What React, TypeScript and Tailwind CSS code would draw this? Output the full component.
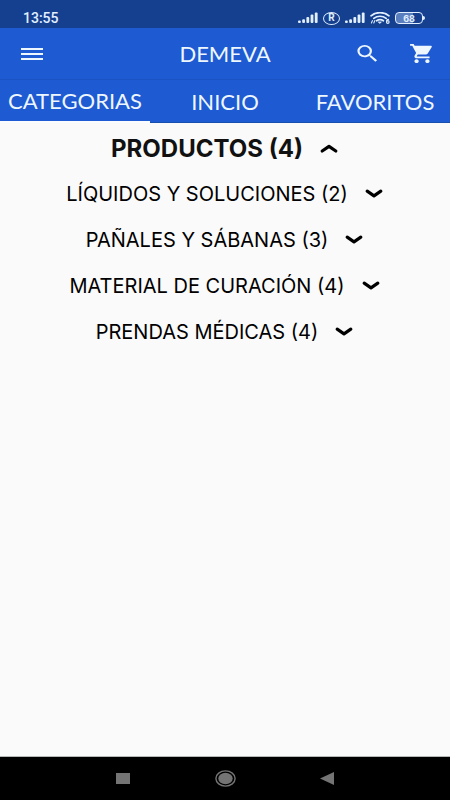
import React, { useState } from "react";

const tabs = ["CATEGORIAS", "INICIO", "FAVORITOS"];

const categories = [
  { name: "LÍQUIDOS Y SOLUCIONES", count: 2 },
  { name: "PAÑALES Y SÁBANAS", count: 3 },
  { name: "MATERIAL DE CURACIÓN", count: 4 },
  { name: "PRENDAS MÉDICAS", count: 4 },
];

const SignalIcon = () => (
  <svg className="h-3 w-5" viewBox="0 0 20 12" fill="currentColor">
    <rect x="0" y="8.6" width="2.8" height="2.4" rx="1" />
    <rect x="4.2" y="7.2" width="2.8" height="3.8" rx="1" />
    <rect x="8.4" y="5" width="2.8" height="6" rx="1" />
    <rect x="12.6" y="2.6" width="2.8" height="8.4" rx="1" />
    <rect x="16.8" y="0.4" width="2.8" height="10.6" rx="1" />
  </svg>
);

const WifiIcon = () => (
  <svg
    className="h-3 w-5"
    viewBox="0 0 20 12"
    fill="none"
    stroke="currentColor"
    strokeWidth="1.7"
    strokeLinecap="round"
  >
    <path d="M1 3.8C6-.4 14-.4 19 3.8" />
    <path d="M3.8 6.4c3.6-2.9 8.8-2.9 12.4 0" />
    <path d="M6.6 8.8c2.1-1.6 4.7-1.6 6.8 0" />
    <path d="M8.6 10h2.8L10 11.2z" fill="currentColor" strokeWidth="0.8" />
    <path d="M1.4 11l1-2.4M3.8 11l1-2.4" strokeWidth="1.1" />
    <path d="M18.4 7.4c-1.2 0-1.8 1-1.8 2.4" strokeWidth="1.2" />
    <circle cx="17.8" cy="10" r="1.3" strokeWidth="1.2" />
  </svg>
);

const Chevron = ({ up = false }: { up?: boolean }) => (
  <svg
    className="h-3 w-5"
    viewBox="0 0 20 12"
    fill="none"
    stroke="currentColor"
    strokeWidth="3.2"
    strokeLinecap="round"
    strokeLinejoin="round"
  >
    <path d={up ? "M3.2 8L10 3.4 16.8 8" : "M3.2 3.2L10 7.8l6.8-4.6"} />
  </svg>
);

const StatusBar = () => (
  <div className="flex h-7 items-end justify-between bg-[#14408f] pr-[25px] pb-[2px] pl-[23px] text-[#e1efff]">
    <span className="font-['Roboto',sans-serif] text-sm leading-4 font-medium">
      13:55
    </span>
    <div className="flex h-4 items-center gap-[5px]">
      <SignalIcon />
      <span className="flex h-[13px] w-[17px] items-center justify-center rounded-[50%] border border-current font-['Roboto',sans-serif] text-[10px] leading-none font-bold">
        R
      </span>
      <SignalIcon />
      <WifiIcon />
      <div className="flex items-center">
        <span className="flex h-3 w-7 items-center justify-center rounded border border-current bg-[linear-gradient(90deg,#5b7fbe_65%,transparent_65%)] font-['Inter',sans-serif] text-[9px] leading-none font-bold">
          68
        </span>
        <span className="h-1 w-[2px] rounded-r bg-current" />
      </div>
    </div>
  </div>
);

const Header = () => (
  <header className="grid h-[52px] grid-cols-[1fr_auto_1fr] items-center border-b border-[#1b53c2] bg-[#1e5ad2] px-[15px] text-[#eef7ff]">
    <button type="button" aria-label="Menú" className="justify-self-start pl-[6px]">
      <svg className="h-3 w-[22px]" viewBox="0 0 22 12" fill="currentColor">
        <rect y="0" width="22" height="2" />
        <rect y="5" width="22" height="2" />
        <rect y="10" width="22" height="2" />
      </svg>
    </button>
    <h1 className="text-[22px] leading-6">DEMEVA</h1>
    <div className="flex items-center gap-7 justify-self-end">
      <button type="button" aria-label="Buscar">
        <svg
          className="h-[23px] w-[27px]"
          viewBox="0 0 24 24"
          preserveAspectRatio="none"
          fill="currentColor"
        >
          <path d="M15.5 14h-.79l-.28-.27A6.471 6.471 0 0 0 16 9.5 6.5 6.5 0 1 0 9.5 16c1.61 0 3.09-.59 4.23-1.57l.27.28v.79l5 4.99L20.49 19l-4.99-5zm-6 0C7.01 14 5 11.99 5 9.5S7.01 5 9.5 5 14 7.01 14 9.5 11.99 14 9.5 14z" />
        </svg>
      </button>
      <button type="button" aria-label="Carrito">
        <svg
          className="h-[23px] w-[26px]"
          viewBox="0 0 24 24"
          preserveAspectRatio="none"
          fill="currentColor"
        >
          <path d="M7 18c-1.1 0-1.99.9-1.99 2S5.9 22 7 22s2-.9 2-2-.9-2-2-2zM1 2v2h2l3.6 7.59-1.35 2.45c-.16.28-.25.61-.25.96 0 1.1.9 2 2 2h12v-2H7.42c-.14 0-.25-.11-.25-.25l.03-.12.9-1.63h7.45c.75 0 1.41-.41 1.75-1.03l3.58-6.49A1.003 1.003 0 0 0 20 4H5.21l-.94-2H1zm16 16c-1.1 0-1.99.9-1.99 2s.89 2 1.99 2 2-.9 2-2-.9-2-2-2z" />
        </svg>
      </button>
    </div>
  </header>
);

const App: React.FC = () => {
  const [activeTab, setActiveTab] = useState("CATEGORIAS");
  const [open, setOpen] = useState(true);

  return (
    <div className="flex min-h-screen flex-col bg-[#fafafa] font-['Lato',sans-serif]">
      <StatusBar />
      <Header />
      <nav className="grid h-[43px] grid-cols-3 bg-[#1e5ad2] text-[22px] leading-6 text-[#eef7ff]">
        {tabs.map((tab) => (
          <button
            key={tab}
            type="button"
            onClick={() => setActiveTab(tab)}
            className={
              tab === activeTab
                ? "border-b-2 border-[#fafcff] pt-px"
                : "border-b border-[#174fae] pt-px"
            }
          >
            {tab}
          </button>
        ))}
      </nav>

      <main className="flex-1 pt-3 font-['Inter',sans-serif] text-black">
        <button
          type="button"
          onClick={() => setOpen(!open)}
          className="flex h-7 w-full items-center justify-center gap-4"
        >
          <span className="text-2xl leading-7 font-bold text-[#111]">
            PRODUCTOS (4)
          </span>
          <Chevron up={open} />
        </button>
        {open && (
          <ul className="pt-2">
            {categories.map((category) => (
              <li key={category.name}>
                <button
                  type="button"
                  className="flex h-[46px] w-full items-center justify-center gap-4"
                >
                  <span className="text-xl">
                    {category.name} ({category.count})
                  </span>
                  <Chevron />
                </button>
              </li>
            ))}
          </ul>
        )}
      </main>

      <footer className="grid h-11 grid-cols-[1fr_60px_1fr] items-center border-t border-[#b5b8b8] bg-black px-[116px] text-[#747474]">
        <button type="button" aria-label="Recientes">
          <svg className="h-[11px] w-[14px]" viewBox="0 0 14 11" fill="currentColor">
            <rect width="14" height="11" />
          </svg>
        </button>
        <button type="button" aria-label="Inicio" className="justify-self-center">
          <svg className="h-[17px] w-[21px]" viewBox="0 0 21 17" fill="currentColor">
            <ellipse cx="10.5" cy="8.5" rx="9.6" ry="7.6" fill="none" stroke="currentColor" strokeWidth="1.4" />
            <ellipse cx="10.5" cy="8.5" rx="7.2" ry="5.7" />
          </svg>
        </button>
        <button type="button" aria-label="Atrás" className="justify-self-end">
          <svg className="h-[13px] w-[14px]" viewBox="0 0 14 13" fill="currentColor">
            <path d="M14 0v13L0 6.5z" />
          </svg>
        </button>
      </footer>
    </div>
  );
};

export default App;
